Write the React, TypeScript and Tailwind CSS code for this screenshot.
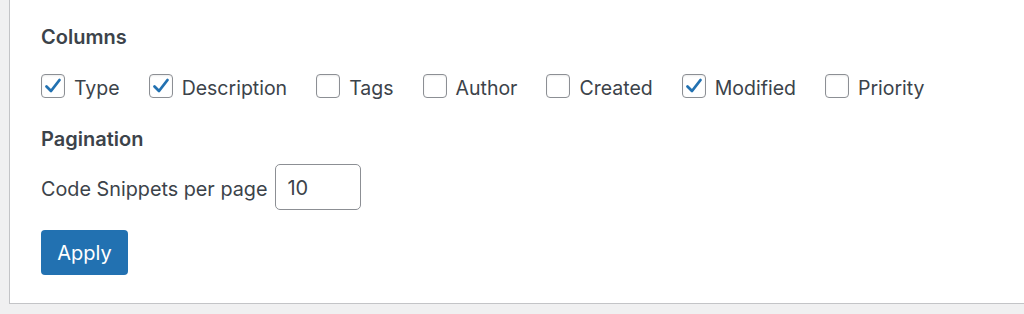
import React from 'react';

const columns = [
  { label: 'Type', checked: true },
  { label: 'Description', checked: true },
  { label: 'Tags', checked: false },
  { label: 'Author', checked: false },
  { label: 'Created', checked: false },
  { label: 'Modified', checked: true },
  { label: 'Priority', checked: false },
];

function Checkbox({ checked }: { checked: boolean }) {
  return (
    <span className="flex h-[24px] w-[24px] shrink-0 items-center justify-center rounded-[4px] border border-[#8c8f94] bg-white shadow-[inset_0_1px_2px_rgba(0,0,0,0.08)]">
      {checked && (
        <svg width="20" height="20" viewBox="0 0 20 20" fill="none">
          <polyline
            points="3.5,10.5 8,15 16.5,4"
            stroke="#2271b1"
            strokeWidth="2.8"
            strokeLinecap="round"
            strokeLinejoin="round"
          />
        </svg>
      )}
    </span>
  );
}

export default function App() {
  return (
    <div
      className="h-[314px] overflow-hidden bg-[#f0f0f1] pl-[9px] text-[#3c434a]"
      style={{ fontFamily: 'Inter, "Noto Sans", Arial, sans-serif' }}
    >
      <div className="border-b border-l border-[#c3c4c7] bg-white pl-[31px] pt-[25px] pb-[28px]">
        {/* Columns */}
        <h3 className="text-[20px] font-semibold leading-[24px]">Columns</h3>
        <div className="mt-[25px] flex items-center">
          {columns.map((c) => (
            <label key={c.label} className="mr-[29px] flex items-center gap-[9px] text-[19.5px] leading-[24px]">
              <Checkbox checked={c.checked} />
              <span className="translate-y-[2px]">{c.label}</span>
            </label>
          ))}
        </div>

        {/* Pagination */}
        <h3 className="mt-[29px] text-[20px] font-semibold leading-[24px]">Pagination</h3>
        <div className="mt-[13px] flex items-center gap-[8px]">
          <span className="translate-y-[2px] text-[19.8px] leading-[24px]">Code Snippets per page</span>
          <div className="flex h-[46px] w-[86px] items-center rounded-[5px] border border-[#8c8f94] px-[11px] pt-[1px] text-[20px]">
            10
          </div>
        </div>

        <button className="mt-[20px] flex h-[45px] w-[87px] items-center justify-center rounded-[4px] bg-[#2271b1] text-[20px] text-white">
          Apply
        </button>
      </div>
    </div>
  );
}
